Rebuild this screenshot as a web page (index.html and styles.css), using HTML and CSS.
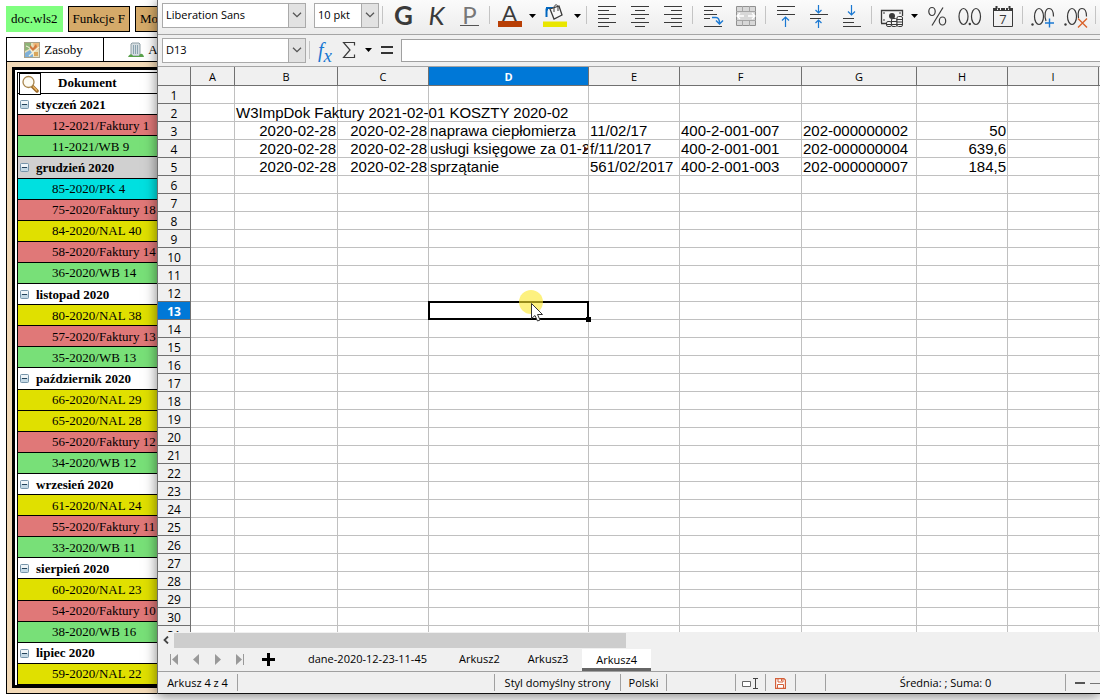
FILE: index.html
```html
<!DOCTYPE html>
<html lang="pl">
<head>
<meta charset="utf-8">
<title>Arkusz kalkulacyjny</title>
<link rel="stylesheet" href="styles.css">
</head>
<body>
<svg class="defs" aria-hidden="true">
  <symbol id="minus-box" viewBox="0 0 9 9"><rect x=".5" y=".5" width="8" height="8" rx="1" fill="#c3d8e4" stroke="#7795aa"/><path d="M1 1h7v3H1z" fill="#eff5f8"/><path d="M2 4.500h5" stroke="#24435a"/></symbol>
  <symbol id="chevron" viewBox="0 0 10 6"><path d="M1 .7 5 4.700 9 .7" fill="none" stroke="#555" stroke-width="1.300"/></symbol>
  <symbol id="drop" viewBox="0 0 7 4"><path d="M0 0h7L3.500 4z" fill="#000"/></symbol>
</svg>

<main class="desk">
  <div class="actions">
    <button class="action action-doc">doc.wls2</button>
    <button class="action">Funkcje F</button>
    <button class="action">Moduły</button>
  </div>
  <nav class="sections">
    <a href="#zasoby" class="section">
      <svg width="16" height="16" viewBox="0 0 16 16"><rect x=".5" y=".5" width="15" height="15" fill="#e7dfbb" stroke="#a9a38b"/><path d="M1 1h6v5L1 9z" fill="#8fb478"/><path d="M9 1h6v6l-4 2z" fill="#efb878"/><path d="M1 11 6 8l3 4v3H1z" fill="#7fb0d8"/><path d="M2 4c4 1 5 3 8 10M15 5 5 14" fill="none" stroke="#f3f0d8" stroke-width="1.200"/><path d="m6 3 3 3 3-4 1 3-4 4-3-3z" fill="#d07840"/><path d="M10 10h4v4h-4z" fill="#d9a65b"/></svg>
      Zasoby</a>
    <a href="#adresy" class="section section-wide">
      <svg width="16" height="16" viewBox="0 0 16 16"><path d="M4 1h7l1 1v12H3V2z" fill="#d5dde1" stroke="#8f9fa6"/><path d="M5 3h1v9H5zM7 3h1v9H7zM9 3h1v9H9z" fill="#8aa3af"/><path d="M0 15c2-4 4-3 5-1h6c1-3 4-3 5 1z" fill="#58a14a"/></svg>
      Adresy</a>
  </nav>
  <section class="panel">
    <div class="frame">
      <div class="docs">
        <div class="docs-head">
          <button class="find" aria-label="Szukaj"><svg width="18" height="18" viewBox="0 0 18 18"><path d="m11 11 5 5" stroke="#9b6a2c" stroke-width="3.500" stroke-linecap="round"/><path d="m12 11.500 4 4" stroke="#edb964" stroke-width="1.500"/><circle cx="7.500" cy="7" r="5.500" fill="#fdfbf2" stroke="#a8854c" stroke-width="1.300"/></svg></button>
          <span>Dokument</span>
        </div>
        <div class="group"><svg><use href="#minus-box"/></svg>styczeń 2021</div>
        <div class="doc red">12-2021/Faktury 1</div>
        <div class="doc green">11-2021/WB 9</div>
        <div class="group current"><svg><use href="#minus-box"/></svg>grudzień 2020</div>
        <div class="doc cyan">85-2020/PK 4</div>
        <div class="doc red">75-2020/Faktury 18</div>
        <div class="doc yellow">84-2020/NAL 40</div>
        <div class="doc red">58-2020/Faktury 14</div>
        <div class="doc green">36-2020/WB 14</div>
        <div class="group"><svg><use href="#minus-box"/></svg>listopad 2020</div>
        <div class="doc yellow">80-2020/NAL 38</div>
        <div class="doc red">57-2020/Faktury 13</div>
        <div class="doc green">35-2020/WB 13</div>
        <div class="group"><svg><use href="#minus-box"/></svg>październik 2020</div>
        <div class="doc yellow">66-2020/NAL 29</div>
        <div class="doc yellow">65-2020/NAL 28</div>
        <div class="doc red">56-2020/Faktury 12</div>
        <div class="doc green">34-2020/WB 12</div>
        <div class="group"><svg><use href="#minus-box"/></svg>wrzesień 2020</div>
        <div class="doc yellow">61-2020/NAL 24</div>
        <div class="doc red">55-2020/Faktury 11</div>
        <div class="doc green">33-2020/WB 11</div>
        <div class="group"><svg><use href="#minus-box"/></svg>sierpień 2020</div>
        <div class="doc yellow">60-2020/NAL 23</div>
        <div class="doc red">54-2020/Faktury 10</div>
        <div class="doc green">38-2020/WB 16</div>
        <div class="group"><svg><use href="#minus-box"/></svg>lipiec 2020</div>
        <div class="doc yellow">59-2020/NAL 22</div>
      </div>
    </div>
  </section>
</main>

<section class="window" aria-label="Arkusz kalkulacyjny">
  <div class="toolbar">
    <div class="combo">
      <select aria-label="Krój czcionki"><option>Liberation Sans</option></select>
      <span class="combo-arrow"><svg width="10" height="6"><use href="#chevron"/></svg></span>
    </div>
    <div class="combo combo-size">
      <select aria-label="Rozmiar czcionki"><option>10 pkt</option></select>
      <span class="combo-arrow"><svg width="10" height="6"><use href="#chevron"/></svg></span>
    </div>
    <span class="sep"></span>
    <button class="tool bold" aria-label="Pogrubienie">G</button>
    <button class="tool italic" aria-label="Kursywa">K</button>
    <button class="tool under" aria-label="Podkreślenie"><span>P</span></button>
    <span class="sep"></span>
    <button class="tool color" aria-label="Kolor czcionki"><span>A</span></button>
    <button class="more" aria-label="Więcej kolorów"><svg width="7" height="4"><use href="#drop"/></svg></button>
    <button class="tool" aria-label="Kolor tła"><svg viewBox="0 0 24 24"><path d="M0 17.500h24v5.500H0z" fill="#e9e600"/><path d="M5 5.500H3.500V13M3 4h7" fill="none" stroke="#0067c0" stroke-width="2"/><path d="m7 5 9-3 3 9-8 4z" fill="#f8f8f8" stroke="#3a3a3a" stroke-width="1.300"/><path d="M11 8V4c0-4 4-4 4-1v4" fill="none" stroke="#3a3a3a"/></svg></button>
    <button class="more" aria-label="Więcej kolorów tła"><svg width="7" height="4"><use href="#drop"/></svg></button>
    <span class="sep"></span>
    <button class="tool" aria-label="Do lewej"><svg viewBox="0 0 24 24"><path d="M3 2.500h18M3 6.500h11M3 10.500h18M3 14.500h11M3 18.500h18M3 22.500h11" stroke="#3a3a3a"/></svg></button>
    <button class="tool" aria-label="Do środka"><svg viewBox="0 0 24 24"><path d="M3 2.500h18M7 6.500h10M3 10.500h18M7 14.500h10M3 18.500h18M7 22.500h10" stroke="#3a3a3a"/></svg></button>
    <button class="tool" aria-label="Do prawej"><svg viewBox="0 0 24 24"><path d="M3 2.500h18M10 6.500h11M3 10.500h18M10 14.500h11M3 18.500h18M10 22.500h11" stroke="#3a3a3a"/></svg></button>
    <span class="sep"></span>
    <button class="tool" aria-label="Zawijaj tekst"><svg viewBox="0 0 24 24"><path d="M3 2.500h18M3 6.500h9M3 10.500h13M3 14.500h6M3 22.500h18" stroke="#3a3a3a"/><path d="M11 13.500h4q3.500 0 3.500 6M15 16.500l3.500 3.500 3.500-3.500" fill="none" stroke="#1a78d2" stroke-width="1.400"/></svg></button>
    <button class="tool" aria-label="Scal komórki"><svg viewBox="0 0 24 24"><path d="M2.500 2.500h19v19h-19z" fill="#d8d8d8" stroke="#909090"/><path d="M2 7.500h20M2 16.500h20M8.500 2v5M15.500 2v5M8.500 17v5M15.500 17v5" stroke="#a5a5a5"/><path d="M3 12h7M6 9l-3 3 3 3M21 12h-7M18 9l3 3-3 3" fill="none" stroke="#fff" stroke-width="1.300"/></svg></button>
    <span class="sep"></span>
    <button class="tool" aria-label="Wyrównaj do góry"><svg viewBox="0 0 24 24"><path d="M3 2.500h18M3 6.500h11M3 10.500h18" stroke="#3a3a3a"/><path d="M11.500 23V13M8 16.500l3.500-3.500 3.500 3.500" fill="none" stroke="#1a78d2" stroke-width="1.200"/></svg></button>
    <button class="tool" aria-label="Wyśrodkuj w pionie"><svg viewBox="0 0 24 24"><path d="M3 10.500h18M3 14.500h11" stroke="#3a3a3a"/><path d="M11.500 1v7.500M8.500 6l3 3 3-3M11.500 24v-8M8.500 19l3-3 3 3" fill="none" stroke="#1a78d2" stroke-width="1.200"/></svg></button>
    <button class="tool" aria-label="Wyrównaj do dołu"><svg viewBox="0 0 24 24"><path d="M3 14.500h11M3 18.500h11M3 22.500h18" stroke="#3a3a3a"/><path d="M11.500 1v9.500M8 7.500l3.500 3.500L15 7.500" fill="none" stroke="#1a78d2" stroke-width="1.200"/></svg></button>
    <span class="sep"></span>
    <button class="tool" aria-label="Waluta"><svg viewBox="0 0 24 24"><path d="M1.500 19V6.500h21V12M1 19.500h5" fill="none" stroke="#3a3a3a" stroke-width="1.300"/><circle cx="12" cy="12" r="3" fill="#3a3a3a"/><path d="M3 9h2M19 9h2M3 16h2" stroke="#3a3a3a"/><g fill="#f2f2f2" stroke="#3a3a3a"><rect x="6.500" y="17.500" width="5" height="5" rx="1.500"/><rect x="11.500" y="14.500" width="5.500" height="8" rx="1.500"/><rect x="17" y="12.500" width="5.500" height="10" rx="1.500"/></g><path d="M7 20.500h4M12 17.500h5M12 20.500h5M17 15.500h5M17 18h5M17 20.500h5" stroke="#3a3a3a"/></svg></button>
    <button class="more" aria-label="Formaty waluty"><svg width="7" height="4"><use href="#drop"/></svg></button>
    <button class="tool" aria-label="Procent"><svg viewBox="0 0 24 24"><g fill="none" stroke="#3a3a3a" stroke-width="1.200"><ellipse cx="7" cy="7.500" rx="3.200" ry="4"/><ellipse cx="17.500" cy="17" rx="3.200" ry="4"/><path d="m18 3.500-11 18"/></g></svg></button>
    <button class="tool" aria-label="Liczba"><svg viewBox="0 0 24 24"><g fill="none" stroke="#3a3a3a" stroke-width="1.200"><ellipse cx="5.500" cy="12.500" rx="4.500" ry="8"/><ellipse cx="18" cy="12.500" rx="4.500" ry="8"/></g><circle cx="11.800" cy="20" r="1.200" fill="#3a3a3a"/></svg></button>
    <button class="tool" aria-label="Data"><svg viewBox="0 0 24 24"><path d="M2.500 4.500h19v18h-19z" fill="none" stroke="#3a3a3a"/><path d="M2 4h20v3H2z" fill="#3a3a3a"/><path d="M6.500 2v4M9.500 2v4M14.500 2v4M17.500 2v4" stroke="#f4f4f4"/><path d="M5.500 2v3M18.500 2v3" stroke="#3a3a3a" stroke-width="2"/><text x="12" y="20" class="day">7</text></svg></button>
    <span class="sep"></span>
    <button class="tool" aria-label="Dodaj miejsce dziesiętne"><svg viewBox="0 0 24 24"><g fill="none" stroke="#3a3a3a" stroke-width="1.200"><ellipse cx="8" cy="12.500" rx="4.500" ry="8"/><path d="M15 17c-2-5-1-12.500 3-12.500 3.500 0 4.500 4 4.500 8"/></g><circle cx="1.500" cy="20.500" r="1.200" fill="#3a3a3a"/><path d="M18.500 14.500v9M14 19h9" stroke="#1a78d2" stroke-width="1.400"/></svg></button>
    <button class="tool" aria-label="Usuń miejsce dziesiętne"><svg viewBox="0 0 24 24"><g fill="none" stroke="#3a3a3a" stroke-width="1.200"><ellipse cx="8" cy="12.500" rx="4.500" ry="8"/><path d="M14.500 14c-1-5 0-9.500 3.500-9.500s4.500 4 4.500 8"/></g><circle cx="1.500" cy="20.500" r="1.200" fill="#3a3a3a"/><path d="m14 14.500 9 9M23 14.500l-9 9" stroke="#d9622b" stroke-width="1.400"/></svg></button>
    <span class="sep"></span>
  </div>

  <div class="formula">
    <div class="combo">
      <input type="text" value="D13" aria-label="Pole nazwy">
      <span class="combo-arrow"><svg width="10" height="6"><use href="#chevron"/></svg></span>
    </div>
    <span class="sep"></span>
    <button class="fn fx" aria-label="Kreator funkcji">f<sub>x</sub></button>
    <button class="fn" aria-label="Suma"><svg width="14" height="16" viewBox="0 0 14 16"><path d="M12.500 3.500v-3H1.500L8 8l-6.500 7.500h11v-3" fill="none" stroke="#3a3a3a" stroke-width="1.200"/></svg></button>
    <button class="more" aria-label="Inne funkcje"><svg width="7" height="4"><use href="#drop"/></svg></button>
    <button class="fn" aria-label="Formuła"><svg width="12" height="9" viewBox="0 0 12 9"><path d="M0 1h12M0 7h12" stroke="#333" stroke-width="2"/></svg></button>
    <input class="line" type="text" aria-label="Wiersz wprowadzania">
  </div>

  <div class="sheet">
    <table class="grid">
      <colgroup><col class="w-head"><col class="w-a"><col class="w-b"><col class="w-n"><col class="w-d"><col class="w-n"><col class="w-f"><col class="w-g"><col class="w-n"><col class="w-n"><col class="w-n"></colgroup>
      <thead><tr><th></th><th>A</th><th>B</th><th>C</th><th class="on">D</th><th>E</th><th>F</th><th>G</th><th>H</th><th>I</th><th></th></tr></thead>
      <tbody id="rows"></tbody>
    </table>
  </div>

  <div class="hscroll"><button class="hs-left" aria-label="Przewiń w lewo"><svg width="6" height="8" viewBox="0 0 6 8"><path d="M5 .5 1.500 4 5 7.500" fill="none" stroke="#444" stroke-width="1.800"/></svg></button><span class="hs-thumb"></span></div>

  <div class="tabs">
    <div class="steps">
      <button aria-label="Pierwszy arkusz"><svg width="10" height="11" viewBox="0 0 10 11"><path d="M1.500 0v11" stroke="#999"/><path d="M9 0v11L3 5.500z" fill="#999"/></svg></button>
      <button aria-label="Poprzedni arkusz"><svg width="10" height="11" viewBox="0 0 10 11"><path d="M8 0v11L2 5.500z" fill="#999"/></svg></button>
      <button aria-label="Następny arkusz"><svg width="10" height="11" viewBox="0 0 10 11"><path d="M2 0v11l6-5.500z" fill="#999"/></svg></button>
      <button aria-label="Ostatni arkusz"><svg width="10" height="11" viewBox="0 0 10 11"><path d="M8.500 0v11" stroke="#999"/><path d="M1 0v11l6-5.500z" fill="#999"/></svg></button>
    </div>
    <button class="add" aria-label="Dodaj arkusz"><svg width="13" height="13" viewBox="0 0 13 13"><path d="M6.500 0v13M0 6.500h13" stroke="#000" stroke-width="3"/></svg></button>
    <button class="tab tab-long">dane-2020-12-23-11-45</button>
    <button class="tab">Arkusz2</button>
    <button class="tab">Arkusz3</button>
    <button class="tab active">Arkusz4</button>
  </div>

  <footer class="status">
    <span class="st-sheet">Arkusz 4 z 4</span>
    <span class="st-blank"></span>
    <span class="st-style">Styl domyślny strony</span>
    <span class="st-lang">Polski</span>
    <span class="st-gap"></span>
    <span class="st-icon"><svg width="17" height="11" viewBox="0 0 17 11"><path d="M.5 3.500h8v5h-8z" fill="#fff" stroke="#666"/><path d="M11 .5h5M11 10.500h5M13.500 0v11" stroke="#444"/></svg></span>
    <span class="st-icon"><svg width="11" height="11" viewBox="0 0 11 11"><path d="M.6.6h8.400l1.400 1.400v8.400H.6z" fill="#fff" stroke="#d4603a" stroke-width="1.200"/><path d="M3 .5v3.500h5V.5M2.500 10V6.500h6V10M6.500 1v2" fill="none" stroke="#d4603a"/></svg></span>
    <span class="st-icon"></span>
    <span class="st-sum">Średnia: ; Suma: 0</span>
    <span class="st-zoom"><svg width="25" height="4" viewBox="0 0 25 4"><path d="M0 2h10" stroke="#555" stroke-width="2"/><path d="M15 2.500h10" stroke="#777"/></svg></span>
  </footer>
</section>
<script src="sheet.js"></script>
</body>
</html>
```
FILE: styles.css
```css
* { box-sizing: border-box; }
body { margin: 0; height: 100vh; min-height: 700px; position: relative; overflow: hidden; background: #fff; color: #000; }
button, input, select { font: inherit; color: inherit; margin: 0; padding: 0; border: 0; background: none; }
.defs { position: absolute; width: 0; height: 0; }

/* page behind the window */
.desk { height: 100%; display: flex; flex-direction: column; padding: 6px 0 6px 6px; font: 13px/18px "Liberation Serif", serif; }
.actions { display: flex; gap: 5px; margin-bottom: 5px; }
.action { height: 26px; padding: 0 4px; border: 1px solid #000; background: #d5aa69; }
.action-doc { border-color: #80ff80; background: #80ff80; }
.sections { display: flex; border: 1px solid #000; background: #fff; }
.section { width: 97px; height: 23px; padding-right: 3px; display: flex; align-items: center; justify-content: center; gap: 4px; border-right: 1px solid #000; color: #000; text-decoration: none; }
.section-wide { width: 110px; }
.panel { flex: 1; display: flex; padding: 5px; border: 1px solid #000; border-top: 0; background: #f3dab7; }
.frame { flex: 1; display: flex; border: 3px solid #000; background: #fff; padding: 2px 2px 0; }
.docs { flex: 1; display: grid; grid-auto-rows: minmax(20px, 1fr); border: 1px solid #000; border-bottom: 0; }
.docs > div { display: flex; align-items: center; border-bottom: 1px solid #000; white-space: nowrap; }
.docs-head { height: 21px; font-weight: bold; }
.docs-head span { padding-left: 17px; }
.find { width: 22px; height: 22px; margin: 0 0 -2px 1px; border: 1px solid #000; background: #fff; display: grid; place-items: center; position: relative; }
.docs > .group { gap: 7px; padding: 1px 0 0 2px; font-weight: bold; }
.group svg { width: 9px; height: 9px; }
.current { background: #d0d0d0; }
.docs > .doc { padding: 1px 0 0 34px; }
.red { background: #e07878; }
.green { background: #78e078; }
.yellow { background: #e0e000; }
.cyan { background: #00e0e0; }

/* spreadsheet window */
.window { position: absolute; inset: 0 0 6px 157px; display: flex; flex-direction: column; overflow: hidden; border-left: 1px solid #707070; border-bottom: 1px solid #111; background: #f0f0f0; box-shadow: 0 2px 12px rgba(0, 0, 0, .5); font: 11px/16px "Open Sans", "Noto Sans", sans-serif; }
.toolbar, .formula { display: flex; align-items: center; flex: none; }
.toolbar { height: 35px; padding: 0 0 5px 4px; border-bottom: 1px solid #a5a5a5; background: linear-gradient(#fbfbfb, #ececec); }
.formula { height: 32px; padding: 0 0 1px 4px; border-bottom: 1px solid #a5a5a5; }
.combo { position: relative; display: flex; flex: none; width: 144px; height: 25px; border: 1px solid #aaa; background: #fff; }
.combo-size { width: 65px; margin: 0 0 0 8px; }
.toolbar .combo { margin-top: 1px; }
.combo select, .combo input { appearance: none; width: 100%; padding-left: 3px; outline: 0; }
.combo-arrow { position: absolute; inset: 0 0 0 auto; width: 17px; display: grid; place-items: center; border-left: 1px solid #aaa; background: #e2e2e2; pointer-events: none; }
.sep { flex: none; width: 7px; height: 18px; background: linear-gradient(#c4c4c4, #c4c4c4) center / 1px 100% no-repeat; }
.combo-size + .sep { margin-right: 1px; }
.tool { flex: none; width: 33px; height: 30px; display: grid; place-items: center; color: #3a3a3a; font: 26px/30px "Lato", sans-serif; }
.tool svg { width: 24px; height: 24px; margin-top: 2px; }
.bold { font-weight: 700; }
.italic { font-style: italic; }
.under { color: #777; }
.under span { width: 19px; height: 22px; font-size: 24px; line-height: 22px; border-bottom: 1px solid #555; }
.color span { width: 24px; height: 24px; font-size: 22px; line-height: 20px; border-bottom: 6px solid #b83f06; }
.more { flex: none; width: 12px; height: 24px; display: grid; place-items: center; }
.toolbar .more { padding-top: 2px; }
.day { font: 13px "Open Sans", sans-serif; text-anchor: middle; fill: #3a3a3a; }
.fn { flex: none; width: 24px; height: 24px; display: grid; place-items: center; }
.fx { display: block; font: italic 20px/20px "Liberation Serif", serif; color: #1a78d2; }
.fx sub { font-size: 19px; line-height: 10px; }
.formula .more { width: 14px; }
.line { flex: 1; min-width: 0; height: 23px; margin-left: 2px; padding: 0 4px; border: 1px solid #a0a0a0; border-right: 0; background: #fff; }

.sheet { flex: 1; min-height: 0; overflow: hidden; background: #fff; }
.grid { table-layout: fixed; width: 1032px; border-collapse: separate; border-spacing: 0; }
.w-head { width: 33px; }
.w-a { width: 44px; }
.w-b { width: 103px; }
.w-n { width: 91px; }
.w-d { width: 160px; }
.w-f { width: 122px; }
.w-g { width: 115px; }
.grid th, .grid td { padding: 0; border-right: 1px solid #c0c0c0; border-bottom: 1px solid #c0c0c0; }
.grid th { border-color: #707070; background: #f0f0f0; font-weight: 400; }
.grid thead th { height: 19px; padding-top: 2px; line-height: 16px; }
.grid tbody th { height: 18px; padding-top: 2px; line-height: 15px; font-size: 12px; }
.grid th.on { background: #0078d7; color: #fff; font-weight: 700; }
.grid td { position: relative; height: 18px; padding: 0 1px; font: 15px/17px "Liberation Sans", sans-serif; white-space: nowrap; }
.grid .num { text-align: right; }
.grid .cut { overflow: hidden; }
.cut::after { content: ""; position: absolute; right: 0; top: 6px; border: 3px solid transparent; border-left: 4px solid #5a1a10; border-right: 0; }
.cell-cursor { position: absolute; z-index: 1; inset: -1px; border: 2px solid #000; }
.handle { position: absolute; right: -4px; bottom: -4px; width: 5px; height: 5px; background: #000; }
.pointer { position: absolute; z-index: 2; left: 89px; top: -13px; width: 26px; height: 36px; }

.hscroll { flex: none; display: flex; height: 16px; }
.hs-left { width: 16px; display: grid; place-items: center; }
.hs-thumb { width: 48%; height: 15px; margin-top: 1px; background: #cdcdcd; }
.tabs { flex: none; display: flex; height: 23px; padding-left: 5px; }
.steps { display: flex; gap: 1px; width: 88px; }
.steps button { flex: 1; display: grid; place-items: center; }
.add { width: 34px; display: grid; place-items: center; }
.tab { padding: 2px 14px 0; border-bottom: 3px solid transparent; }
.tab.active { margin-top: 1px; border-color: #666; background: #fff; }
.tab-long { min-width: 155px; margin-left: 5px; }
.status { flex: none; display: flex; height: 22px; padding: 2px 0; border-top: 1px solid #a0a0a0; }
.status span { display: flex; align-items: center; justify-content: center; padding-top: 1px; border-right: 1px solid #a0a0a0; white-space: nowrap; }
.st-sheet { width: 80px; }
.st-blank { flex: 1; }
.st-style { width: 126px; }
.st-lang { width: 46px; }
.st-gap { width: 69px; }
.st-icon { width: 30px; }
.st-sum { width: 240px; }
.status .st-zoom { width: 34px; border: 0; justify-content: flex-end; }
```
FILE: sheet.js
```js
const cells = {
  B2: 'W3ImpDok Faktury 2021-02-01 KOSZTY 2020-02',
  B3: '2020-02-28', C3: '2020-02-28', D3: 'naprawa ciepłomierza', E3: '11/02/17', F3: '400-2-001-007', G3: '202-000000002', H3: '50',
  B4: '2020-02-28', C4: '2020-02-28', D4: 'usługi księgowe za 01-2', E4: 'f/11/2017', F4: '400-2-001-001', G4: '202-000000004', H4: '639,6',
  B5: '2020-02-28', C5: '2020-02-28', D5: 'sprzątanie', E5: '561/02/2017', F5: '400-2-001-003', G5: '202-000000007', H5: '184,5'
};
const cursor = '<span class="cell-cursor"><span class="handle"></span></span>' +
  '<svg class="pointer" viewBox="0 0 26 36"><circle cx="13" cy="13" r="12" fill="#fbe829" fill-opacity=".6"/>' +
  '<path d="M13.500 14.500v15l3.500-3 2.500 5.500 2.500-1-2.500-5.500h5z" fill="#fff" stroke="#333"/></svg>';
const body = document.getElementById('rows');
for (let r = 1; r <= 31; r++) {
  const row = body.insertRow();
  const head = document.createElement('th');
  head.textContent = r;
  if (r === 13) head.className = 'on';
  row.append(head);
  for (const c of 'ABCDEFGHIJ') {
    const cell = row.insertCell();
    const key = c + r;
    if (cells[key]) cell.textContent = cells[key];
    if (r > 2 && 'BCH'.includes(c)) cell.className = 'num';
    if (key === 'D4') cell.className = 'cut';
    if (key === 'D13') cell.innerHTML = cursor;
  }
}
```
